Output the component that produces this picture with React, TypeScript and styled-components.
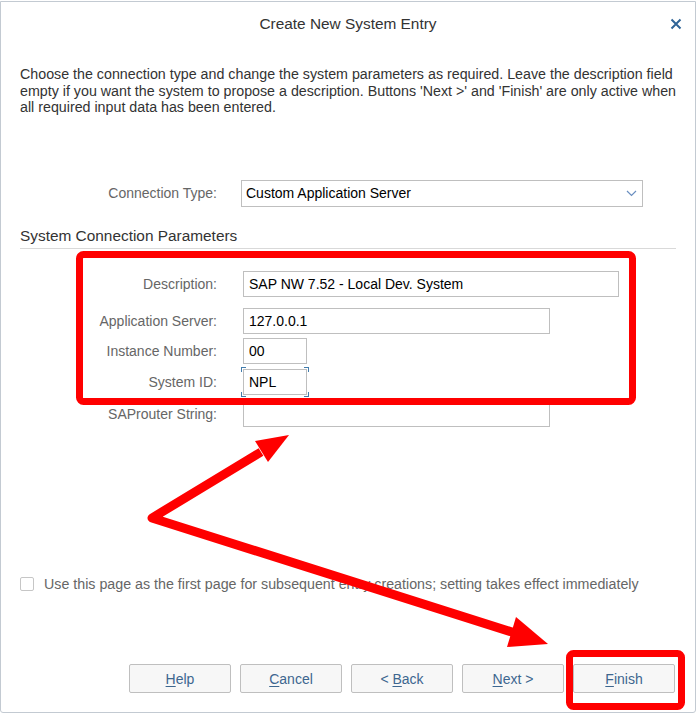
import React from 'react';
import styled, { createGlobalStyle } from 'styled-components';

const Global = createGlobalStyle`
  html, body {
    margin: 0;
    padding: 0;
    background: #fff;
  }
  body {
    font-family: "Liberation Sans", Arial, sans-serif;
  }
  * {
    box-sizing: border-box;
  }
`;

const Page = styled.div`
  position: relative;
  width: 696px;
  height: 713px;
  overflow: hidden;
`;

const Dialog = styled.div`
  margin-top: 1px;
  width: 696px;
  height: 712px;
  border: 1px solid #c3cad2;
  border-radius: 0 0 3px 3px;
  display: flex;
  flex-direction: column;
  background: #fff;
`;

const Header = styled.div`
  height: 43px;
  display: grid;
  grid-template-columns: 1fr auto 1fr;
  align-items: center;
`;

const Title = styled.h1`
  grid-column: 2;
  margin: 0;
  font-size: 15.4px;
  font-weight: normal;
  color: #333;
`;

const Close = styled.button`
  grid-column: 3;
  justify-self: end;
  margin-right: 13px;
  padding: 0;
  border: 0;
  background: none;
  width: 12px;
  height: 12px;
  display: flex;
`;

const Intro = styled.p`
  margin: 21px 15px 0 19px;
  font-size: 14.25px;
  line-height: 16.5px;
  color: #333;
`;

const Row = styled.div<{ $gap: number }>`
  display: grid;
  grid-template-columns: 197px 1fr;
  column-gap: 26px;
  align-items: center;
  padding: 0 19px;
  margin-top: ${(p) => p.$gap}px;
`;

const Label = styled.label`
  text-align: right;
  font-size: 14px;
  color: #666;
`;

const Select = styled.div`
  margin-left: -2px;
  width: 402px;
  height: 27px;
  border: 1px solid #bfbfbf;
  display: flex;
  align-items: center;
  justify-content: space-between;
  padding: 0 5px 0 4px;
  font-size: 14px;
  color: #000;
`;

const Field = styled.input<{ $w: number }>`
  width: ${(p) => p.$w}px;
  height: 26px;
  border: 1px solid #bfbfbf;
  padding: 0 5px;
  margin: 0;
  font-family: "Liberation Sans", Arial, sans-serif;
  font-size: 14px;
  color: #000;
  background: #fff;
  outline: none;
`;

const Focus = styled.div`
  position: relative;
  width: 64px;
  height: 26px;
`;

const Corner = styled.span<{ $v: 'top' | 'bottom'; $h: 'left' | 'right' }>`
  position: absolute;
  width: 5px;
  height: 5px;
  ${(p) => p.$v}: -2px;
  ${(p) => p.$h}: -2px;
  border-${(p) => p.$v}: 1.5px solid #427cac;
  border-${(p) => p.$h}: 1.5px solid #427cac;
`;

const Section = styled.h2`
  margin: 20px 19px 0;
  padding-bottom: 3px;
  border-bottom: 1px solid #d9d9d9;
  font-size: 15.4px;
  line-height: 18px;
  font-weight: normal;
  color: #333;
`;

const CheckRow = styled.div`
  margin: 149px 0 0 19px;
  display: flex;
  align-items: center;
  gap: 10px;
  font-size: 14.25px;
  color: #666;
`;

const Box = styled.span`
  width: 14px;
  height: 14px;
  border: 1px solid #c6c6c6;
  border-radius: 2px;
  background: #fff;
`;

const Footer = styled.div`
  margin-top: auto;
  display: flex;
  justify-content: flex-end;
  gap: 9px;
  padding: 0 20px 19px 0;
`;

const Button = styled.button`
  width: 102px;
  height: 29px;
  padding: 0;
  background: #f7f7f7;
  border: 1px solid #bfbfbf;
  border-radius: 2px;
  font-family: "Liberation Sans", Arial, sans-serif;
  font-size: 14px;
  color: #3d668f;
  u {
    text-underline-offset: 2px;
  }
`;

const Marks = styled.svg`
  position: absolute;
  top: 0;
  left: 0;
  pointer-events: none;
`;

const RED = '#ff0000';

function Arrows() {
  return (
    <Marks width={696} height={713} viewBox="0 0 696 713">
      <rect x={79.5} y={254.5} width={553} height={147} rx={4} fill="none" stroke={RED} strokeWidth={7} />
      <rect x={569.5} y={653.5} width={112} height={53} rx={4} fill="none" stroke={RED} strokeWidth={7} />
      <polyline
        points="261,452 152,518 515,633"
        fill="none"
        stroke={RED}
        strokeWidth={9}
        strokeLinejoin="round"
      />
      <polygon points="289,435 268,462 255,441" fill={RED} />
      <polygon points="548,644 507,647 516,617" fill={RED} />
    </Marks>
  );
}

export default function App() {
  return (
    <Page>
      <Global />
      <Dialog>
        <Header>
          <Title>Create New System Entry</Title>
          <Close aria-label="Close">
            <svg width="12" height="12" viewBox="0 0 12 12">
              <path d="M1.5 1.5 L10.5 10.5 M10.5 1.5 L1.5 10.5" stroke="#2f6497" strokeWidth="2" />
            </svg>
          </Close>
        </Header>
        <Intro>
          Choose the connection type and change the system parameters as required. Leave the description field
          empty if you want the system to propose a description. Buttons 'Next &gt;' and 'Finish' are only active when
          all required input data has been entered.
        </Intro>
        <Row $gap={64}>
          <Label>Connection Type:</Label>
          <Select>
            <span>Custom Application Server</span>
            <svg width="11" height="7" viewBox="0 0 11 7">
              <polyline points="1,1 5.5,5.5 10,1" fill="none" stroke="#6a8fc0" strokeWidth="1.2" />
            </svg>
          </Select>
        </Row>
        <Section>System Connection Parameters</Section>
        <Row $gap={22}>
          <Label>Description:</Label>
          <Field $w={376} readOnly value="SAP NW 7.52 - Local Dev. System" />
        </Row>
        <Row $gap={11}>
          <Label>Application Server:</Label>
          <Field $w={307} readOnly value="127.0.0.1" />
        </Row>
        <Row $gap={4}>
          <Label>Instance Number:</Label>
          <Field $w={64} readOnly value="00" />
        </Row>
        <Row $gap={5}>
          <Label>System ID:</Label>
          <Focus>
            <Field $w={64} readOnly value="NPL" />
            <Corner $v="top" $h="left" />
            <Corner $v="top" $h="right" />
            <Corner $v="bottom" $h="left" />
            <Corner $v="bottom" $h="right" />
          </Focus>
        </Row>
        <Row $gap={6}>
          <Label>SAProuter String:</Label>
          <Field $w={307} readOnly value="" />
        </Row>
        <CheckRow>
          <Box />
          <span>Use this page as the first page for subsequent entry creations; setting takes effect immediately</span>
        </CheckRow>
        <Footer>
          <Button><u>H</u>elp</Button>
          <Button><u>C</u>ancel</Button>
          <Button>&lt; <u>B</u>ack</Button>
          <Button><u>N</u>ext &gt;</Button>
          <Button><u>F</u>inish</Button>
        </Footer>
      </Dialog>
      <Arrows />
    </Page>
  );
}
